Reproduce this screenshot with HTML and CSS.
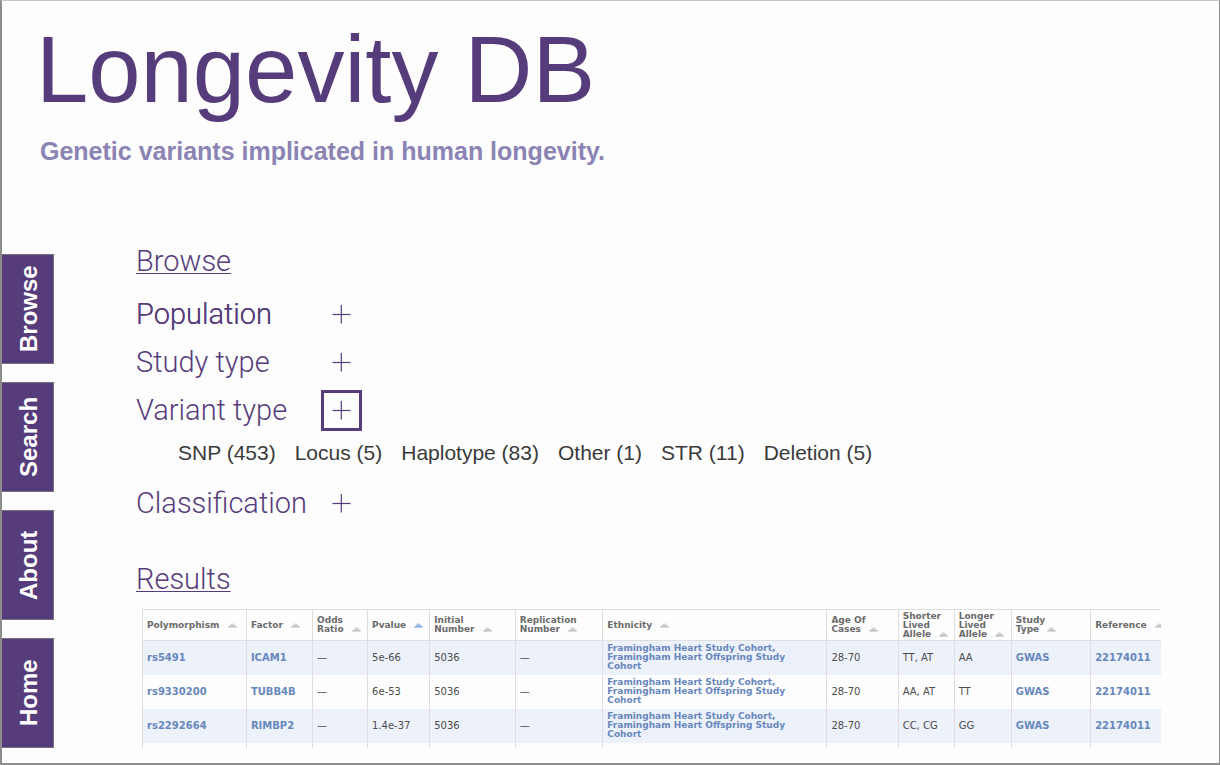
FILE: index.html
```html
<!DOCTYPE html>
<html lang="en">
<head>
<meta charset="utf-8">
<title>Longevity DB</title>
<link rel="stylesheet" href="styles.css">
</head>
<body>
<svg class="defs" aria-hidden="true">
  <symbol id="plus" viewBox="0 0 20 20"><path d="M.5 10.5h18" fill="none" stroke="currentColor" stroke-width="1.2"/><path d="M9.3 1v18.5" fill="none" stroke="currentColor" stroke-width="1.2"/></symbol>
  <symbol id="sort" viewBox="0 0 9 5"><path d="M3.4.6h2.2L8.6 4.2H.4z" fill="currentColor" fill-opacity=".6"/><path d="M.3 3.9h8.4" stroke="currentColor" stroke-width="1"/></symbol>
</svg>
<header class="masthead">
  <h1 class="title">Longevity DB</h1>
  <p class="tagline">Genetic variants implicated in human longevity.</p>
</header>
<div class="layout">
  <nav class="tabs" aria-label="Main">
    <a class="tab" href="#browse">Browse</a>
    <a class="tab" href="#search">Search</a>
    <a class="tab" href="#about">About</a>
    <a class="tab" href="#home">Home</a>
  </nav>
  <main class="content">
    <section id="browse">
      <h2 class="heading">Browse</h2>
      <div class="filters">
        <div class="filter">
          <h3 class="filter-name strong">Population</h3>
          <button class="toggle" type="button" aria-label="Population"><svg class="plus"><use href="#plus"/></svg></button>
        </div>
        <div class="filter">
          <h3 class="filter-name">Study type</h3>
          <button class="toggle" type="button" aria-label="Study type"><svg class="plus"><use href="#plus"/></svg></button>
        </div>
        <div class="filter">
          <h3 class="filter-name">Variant type</h3>
          <button class="toggle open" type="button" aria-label="Variant type" aria-expanded="true"><svg class="plus"><use href="#plus"/></svg></button>
        </div>
        <div class="options">
          <a href="#snp">SNP (453)</a>
          <a href="#locus">Locus (5)</a>
          <a href="#haplotype">Haplotype (83)</a>
          <a href="#other">Other (1)</a>
          <a href="#str">STR (11)</a>
          <a href="#deletion">Deletion (5)</a>
        </div>
        <div class="filter">
          <h3 class="filter-name">Classification</h3>
          <button class="toggle" type="button" aria-label="Classification"><svg class="plus"><use href="#plus"/></svg></button>
        </div>
      </div>
    </section>
    <section class="results">
      <h2 class="heading">Results</h2>
      <div class="table-wrap">
        <table class="data">
          <colgroup>
            <col class="c-poly"><col class="c-factor"><col class="c-odds"><col class="c-pvalue"><col class="c-initial"><col class="c-repl"><col class="c-ethnicity"><col class="c-age"><col class="c-short"><col class="c-long"><col class="c-study"><col class="c-ref">
          </colgroup>
          <thead>
            <tr>
              <th>Polymorphism <svg class="sort"><use href="#sort"/></svg></th>
              <th>Factor <svg class="sort"><use href="#sort"/></svg></th>
              <th>Odds<br>Ratio <svg class="sort"><use href="#sort"/></svg></th>
              <th aria-sort="ascending">Pvalue <svg class="sort active"><use href="#sort"/></svg></th>
              <th>Initial<br>Number <svg class="sort"><use href="#sort"/></svg></th>
              <th>Replication<br>Number <svg class="sort"><use href="#sort"/></svg></th>
              <th>Ethnicity <svg class="sort"><use href="#sort"/></svg></th>
              <th>Age Of<br>Cases <svg class="sort"><use href="#sort"/></svg></th>
              <th>Shorter<br>Lived<br>Allele <svg class="sort"><use href="#sort"/></svg></th>
              <th>Longer<br>Lived<br>Allele <svg class="sort"><use href="#sort"/></svg></th>
              <th>Study<br>Type <svg class="sort"><use href="#sort"/></svg></th>
              <th>Reference <svg class="sort"><use href="#sort"/></svg></th>
            </tr>
          </thead>
          <tbody>
            <tr>
              <td><a href="#rs5491">rs5491</a></td><td><a href="#icam1">ICAM1</a></td><td>—</td><td>5e-66</td><td>5036</td><td>—</td>
              <td class="cohort"><a href="#fhs">Framingham Heart Study Cohort,</a><br><a href="#fhos">Framingham Heart Offspring Study<br>Cohort</a></td>
              <td>28-70</td><td>TT, AT</td><td>AA</td><td><a href="#gwas">GWAS</a></td><td><a href="#22174011">22174011</a></td>
            </tr>
            <tr>
              <td><a href="#rs9330200">rs9330200</a></td><td><a href="#tubb4b">TUBB4B</a></td><td>—</td><td>6e-53</td><td>5036</td><td>—</td>
              <td class="cohort"><a href="#fhs">Framingham Heart Study Cohort,</a><br><a href="#fhos">Framingham Heart Offspring Study<br>Cohort</a></td>
              <td>28-70</td><td>AA, AT</td><td>TT</td><td><a href="#gwas">GWAS</a></td><td><a href="#22174011">22174011</a></td>
            </tr>
            <tr>
              <td><a href="#rs2292664">rs2292664</a></td><td><a href="#rimbp2">RIMBP2</a></td><td>—</td><td>1.4e-37</td><td>5036</td><td>—</td>
              <td class="cohort"><a href="#fhs">Framingham Heart Study Cohort,</a><br><a href="#fhos">Framingham Heart Offspring Study<br>Cohort</a></td>
              <td>28-70</td><td>CC, CG</td><td>GG</td><td><a href="#gwas">GWAS</a></td><td><a href="#22174011">22174011</a></td>
            </tr>
            <tr class="tail"><td></td><td></td><td></td><td></td><td></td><td></td><td></td><td></td><td></td><td></td><td></td><td></td></tr>
          </tbody>
        </table>
      </div>
    </section>
  </main>
</div>
</body>
</html>
```
FILE: styles.css
```css
* { box-sizing: border-box; }
body {
  margin: 0;
  min-height: 100vh;
  background: #fdfdfd;
  border: solid #8c8c8c;
  border-width: 1px 1px 2px 2px;
  border-top-color: #c8c8c8;
  font-family: "Liberation Sans", Arial, sans-serif;
  color: #573c7b;
}
h1, h2, h3, p { margin: 0; }
a { color: inherit; text-decoration: none; }
.defs { display: none; }

.masthead { padding: 17px 34px 0; }
.title { font-size: 94px; line-height: 104px; font-weight: 400; }
.tagline { margin-top: 13px; padding-left: 4px; font-size: 25px; line-height: 32px; font-weight: 700; color: #8a83b3; }

.layout { display: flex; align-items: flex-start; gap: 82px; padding-top: 76px; }
.tabs { display: flex; flex-direction: column; gap: 18px; padding-top: 11px; }
.tab {
  display: flex;
  align-items: center;
  justify-content: center;
  width: 52px;
  height: 110px;
  background: #573c7b;
  border: 1px solid #777279;
  border-right: 0;
  padding-right: 2px;
  color: #fff;
  font-size: 24px;
  font-weight: 700;
  writing-mode: vertical-rl;
  transform: rotate(180deg);
}
.content { flex: 1; min-width: 0; padding-right: 58px; }
.heading, .filter-name {
  font-family: Roboto, "Liberation Sans", sans-serif;
  font-weight: 300;
  font-size: 29px;
  line-height: 36px;
}
.heading { text-decoration: underline; text-decoration-thickness: 1px; text-underline-offset: 2px; }
.filters { padding-top: 11px; }
.filter { display: grid; grid-template-columns: 185px 41px; align-items: center; height: 48px; }
.strong { text-shadow: 0 0 0 currentColor; }
.toggle {
  display: flex;
  align-items: center;
  justify-content: center;
  width: 41px;
  height: 41px;
  padding: 0;
  border: 3px solid transparent;
  background: none;
  color: #573c7b;
}
.toggle.open { border-color: #573c7b; }
.plus { width: 20px; height: 20px; }
.options { display: flex; flex-wrap: wrap; gap: 0 19px; padding: 7px 0 14px 42px; font-size: 21px; line-height: 24px; color: #3a3a3a; }
.results { padding-top: 34px; }

.table-wrap { margin: 12px 0 0 6px; overflow: hidden; }
.data {
  width: 100%;
  table-layout: fixed;
  border-collapse: collapse;
  border-top: 1px solid #dedede;
  font-family: "DejaVu Sans", sans-serif;
  font-size: 10px;
  line-height: 9px;
  color: #4c4c4c;
}
.data th, .data td { padding: 0 0 0 4px; border-left: 1px solid #dedede; text-align: left; vertical-align: middle; white-space: nowrap; }
.data th { height: 31px; font-size: 9px; color: #6b6b6b; border-bottom: 1px solid #dedede; overflow: hidden; }
.data td { height: 34px; }
.data .cohort { font-size: 9px; }
.data tbody tr:nth-child(odd) { background: #ecf1fa; }
.data a { color: #6887bd; font-weight: 700; }
.data .tail td { height: 5px; }
.sort { width: 9px; height: 5px; margin-left: 5px; color: #b4b4b4; }
.sort.active { color: #6a9bd8; }
.c-poly { width: 10.2%; }
.c-factor { width: 6.5%; }
.c-odds { width: 5.4%; }
.c-pvalue { width: 6.1%; }
.c-initial { width: 8.4%; }
.c-repl { width: 8.6%; }
.c-ethnicity { width: 22%; }
.c-age { width: 7%; }
.c-short { width: 5.5%; }
.c-long { width: 5.6%; }
.c-study { width: 7.8%; }
.c-ref { width: 6.9%; }
```
